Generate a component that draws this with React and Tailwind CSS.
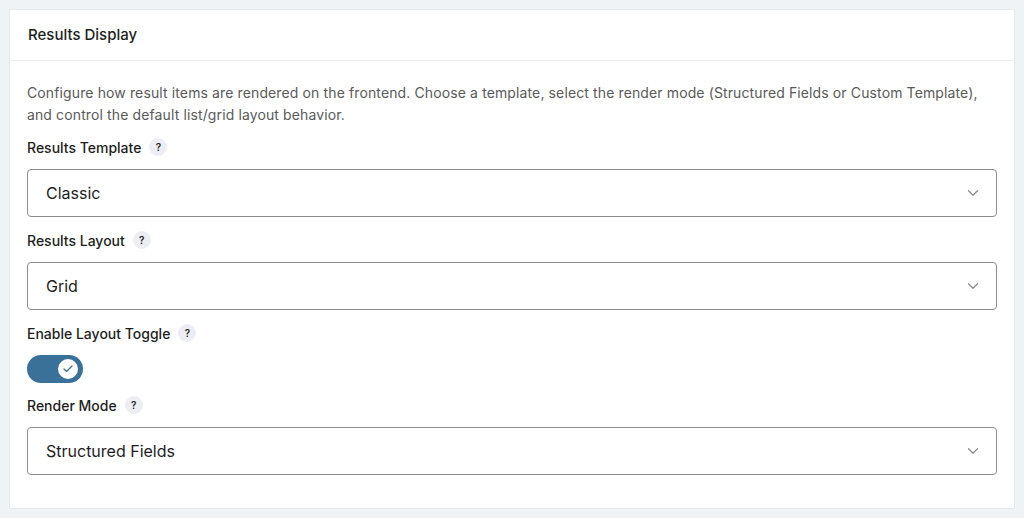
import { ChevronDown, Check } from "lucide-react"

const Help = () => (
  <span className="ml-2 inline-flex h-[18px] w-[18px] items-center justify-center rounded-full bg-[#eceef3] text-[10px] font-semibold text-[#1e1e1e]">
    ?
  </span>
)

const Field = ({ label, value }) => (
  <div>
    <label className="flex h-[22px] items-center text-[14px] font-medium text-[#1e1e1e]">
      {label}
      <Help />
    </label>
    <div className="mt-[11px] flex h-[48px] items-center justify-between rounded-[4px] border border-[#8c8c8c] bg-white pl-[18px] pr-[14px]">
      <span className="text-[16px] text-[#1e1e1e]">{value}</span>
      <ChevronDown size={18} strokeWidth={1.6} className="text-[#8a8a8a]" />
    </div>
  </div>
)

export default function App() {
  return (
    <div className="min-h-[518px] bg-[#f0f3f6] px-[9px] pt-[9px] font-['Inter','Noto_Sans',sans-serif]">
      <div className="w-[1006px] rounded-[2px] border border-[#e6e9ec] bg-white">
        <div className="flex h-[51px] items-center border-b border-[#eceef0] px-[18px]">
          <h2 className="text-[15px] font-medium text-[#1e1e1e]">Results Display</h2>
        </div>
        <div className="px-[17px] pt-[21px] pb-[33px]">
          <p className="text-[14px] leading-[22px] tracking-[0.12px] text-[#5a5a5a]">
            Configure how result items are rendered on the frontend. Choose a template, select the render mode (Structured Fields or Custom Template), and control the default list/grid layout behavior.
          </p>
          <div className="mt-[10px] flex flex-col gap-[12px]">
            <Field label="Results Template" value="Classic" />
            <Field label="Results Layout" value="Grid" />
            <div>
              <label className="flex h-[22px] items-center text-[14px] font-medium text-[#1e1e1e]">
                Enable Layout Toggle
                <Help />
              </label>
              <div className="mt-[11px] mb-[-1px] flex h-[28px] w-[56px] items-center justify-end rounded-full bg-[#3a7199] pr-[5px]">
                <span className="flex h-[20px] w-[20px] items-center justify-center rounded-full bg-white">
                  <Check size={12} strokeWidth={2.5} className="text-[#3a7199]" />
                </span>
              </div>
            </div>
            <Field label="Render Mode" value="Structured Fields" />
          </div>
        </div>
      </div>
    </div>
  )
}
